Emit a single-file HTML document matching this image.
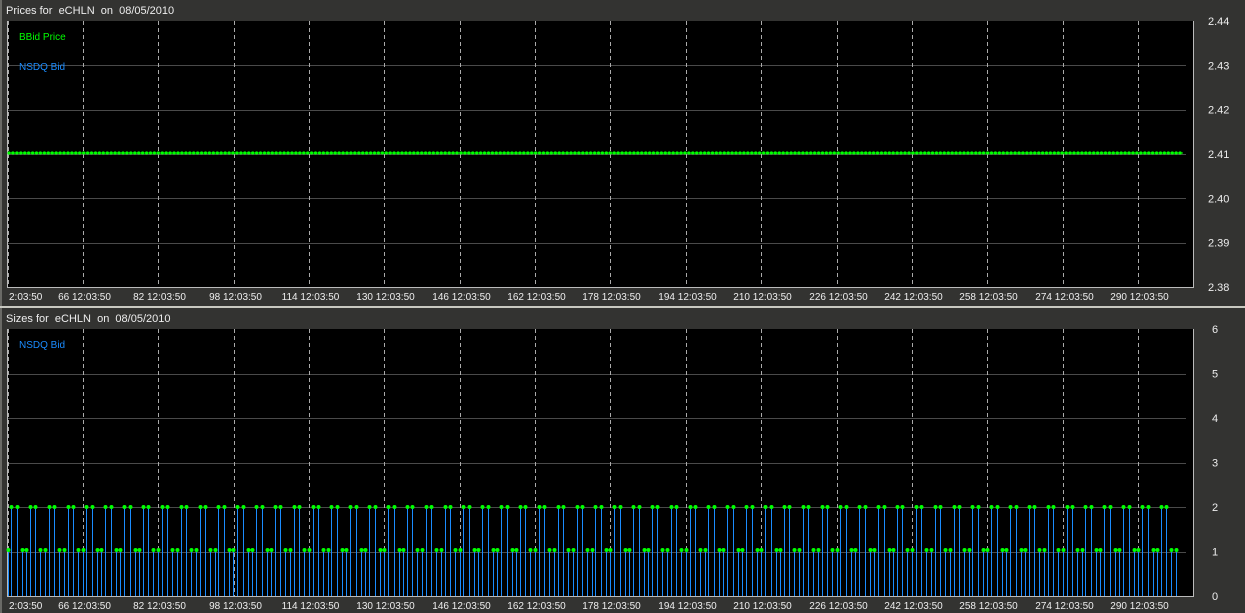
<!DOCTYPE html>
<html><head><meta charset="utf-8"><style>
html,body{margin:0;padding:0;background:#333331;width:1245px;height:613px;overflow:hidden}
svg{display:block;font-family:"Liberation Sans",sans-serif}
</style></head><body>
<svg id="s" width="1245" height="613" xmlns="http://www.w3.org/2000/svg"></svg>
<script>
var s='';
s+='<rect x="0" y="0" width="2" height="613" fill="#6a6a66"/>';
s+='<rect x="0" y="306" width="1245" height="2" fill="#c8c8c0"/>';
function panel(y0,y1,title,labels,lx){
  s+='<text x="6" y="'+(y0-7)+'" font-size="11" fill="#eee">'+title+'</text>';
  s+='<rect x="7" y="'+y0+'" width="1187" height="'+(y1-y0)+'" fill="#000"/>';
  s+='<rect x="7" y="'+y0+'" width="1" height="'+(y1-y0)+'" fill="#bbb"/>';
  s+='<rect x="7" y="'+y1+'" width="1187" height="1" fill="#bbb"/>';
  s+='<rect x="1193" y="'+y0+'" width="1" height="'+(y1-y0)+'" fill="#bbb"/>';
  var h=(y1-y0)/6;
  for(var i=1;i<6;i++){var y=Math.round(y0+i*h)+.5;s+='<line x1="8" x2="1186" y1="'+y+'" y2="'+y+'" stroke="#4a4a4a"/>';}
  for(var i=0;i<=6;i++){var y=y0+i*h;s+='<text x="'+lx+'" y="'+(y+4)+'" font-size="11" fill="#eee">'+labels[i]+'</text>';}
  s+='<line x1="8.5" x2="8.5" y1="'+y0+'" y2="'+y1+'" stroke="#aaa" stroke-dasharray="4,3"/>';
  for(var k=0;k<15;k++){var x=Math.round(83+k*75.35)+.5;
    s+='<line x1="'+x+'" x2="'+x+'" y1="'+y0+'" y2="'+y1+'" stroke="#aaa" stroke-dasharray="4,3"/>';
    s+='<text x="'+(x+1)+'" y="'+(y1+13)+'" font-size="10" fill="#eee" text-anchor="middle">'+(66+16*k)+' 12:03:50</text>';
  }
  s+='<text x="9" y="'+(y1+13)+'" font-size="10" fill="#eee">2:03:50</text>';
}
panel(21,287,'Prices for&#160; eCHLN&#160; on&#160; 08/05/2010',['2.44','2.43','2.42','2.41','2.40','2.39','2.38'],1208);
panel(329,596,'Sizes for&#160; eCHLN&#160; on&#160; 08/05/2010',['6','5','4','3','2','1','0'],1212);
s+='<text x="19" y="40" font-size="10" fill="#00ff00">BBid Price</text>';
s+='<text x="19" y="70" font-size="10" fill="#1a8cff">NSDQ Bid</text>';
s+='<text x="19" y="348" font-size="10" fill="#1a8cff">NSDQ Bid</text>';
s+='<line x1="8" x2="1183" y1="153" y2="153" stroke="#00ff00" stroke-width="1"/>';
for(var x=9;x<=1182;x+=3.93){s+='<circle cx="'+x.toFixed(1)+'" cy="153" r="1.6" fill="#00ff00"/>';}
// size bars
var y2=507,y1v=550,yb=596;
function bar(x,y){x=Math.round(x)+.5;s+='<line x1="'+x+'" x2="'+x+'" y1="'+y+'" y2="'+yb+'" stroke="#1a8cff"/><circle cx="'+x+'" cy="'+y+'" r="2" fill="#00ff00"/>';}
bar(8,y1v);
var p=18.85;
for(var g=0;g<62;g++){var b=11+g*p;
  if(b+17>1188)break;
  bar(b,y2);bar(b+5.5,y2);bar(b+10.5,y1v);bar(b+15,y1v);}
document.getElementById('s').innerHTML=s;
</script>
</body></html>
